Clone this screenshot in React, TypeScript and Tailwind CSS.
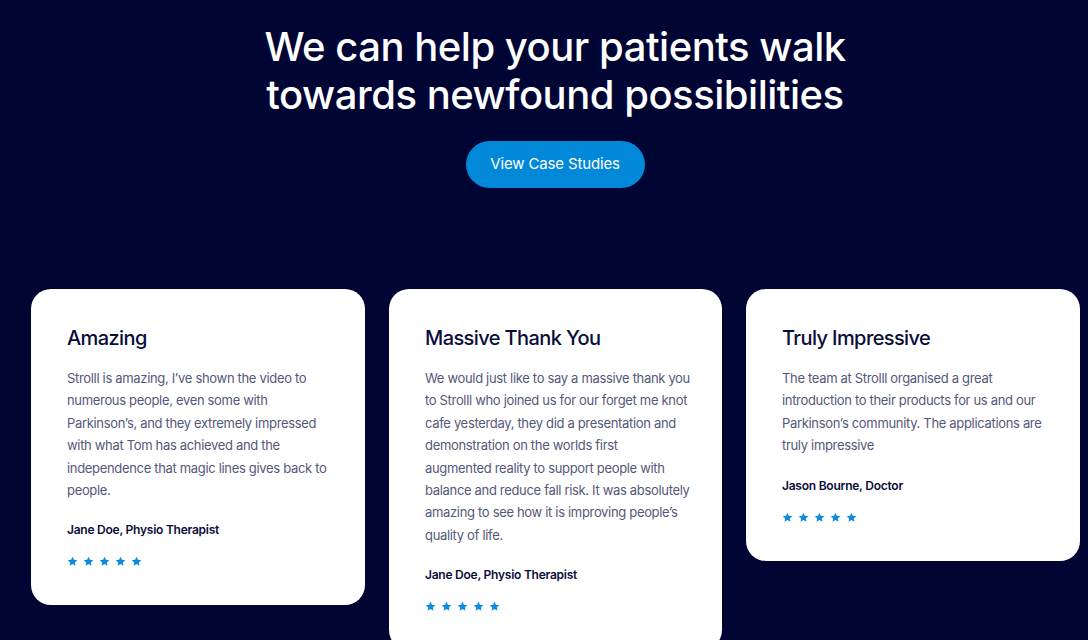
const testimonials = [
  {
    title: 'Amazing',
    lines: [
      'Strolll is amazing, I\u2019ve shown the video to',
      'numerous people, even some with',
      'Parkinson\u2019s, and they extremely impressed',
      'with what Tom has achieved and the',
      'independence that magic lines gives back to',
      'people.',
    ],
    author: 'Jane Doe, Physio Therapist',
    width: 'w-[334px]',
  },
  {
    title: 'Massive Thank You',
    lines: [
      'We would just like to say a massive thank you',
      'to Strolll who joined us for our forget me knot',
      'cafe yesterday, they did a presentation and',
      'demonstration on the worlds first',
      'augmented reality to support people with',
      'balance and reduce fall risk. It was absolutely',
      'amazing to see how it is improving people\u2019s',
      'quality of life.',
    ],
    author: 'Jane Doe, Physio Therapist',
    width: 'w-[333px]',
  },
  {
    title: 'Truly Impressive',
    lines: [
      'The team at Strolll organised a great',
      'introduction to their products for us and our',
      'Parkinson\u2019s community. The applications are',
      'truly impressive',
    ],
    author: 'Jason Bourne, Doctor',
    width: 'w-[334px]',
  },
]

function Star() {
  return (
    <svg viewBox="0 0 24 24" className="w-[11px] h-[11px] fill-[#0a8bdb]">
      <path d="M12 1.5l3.1 6.9 7.4.7-5.6 5 1.7 7.4L12 17.6l-6.6 3.9 1.7-7.4-5.6-5 7.4-.7z" />
    </svg>
  )
}

export default function App() {
  return (
    <div className="w-[1088px] h-[640px] overflow-hidden bg-[#000533] font-['Inter',sans-serif]">
      {/* Hero */}
      <div className="flex flex-col items-center pt-[23px] pl-[22px]">
        <h1 className="text-center text-white text-[40px] leading-[48px] font-medium tracking-[-0.012em]">
          We can help your patients walk
          <br />
          towards newfound possibilities
        </h1>
        <button className="mt-[22px] w-[179px] h-[47px] rounded-full bg-[#0288d9] text-white text-[15px] tracking-[-0.01em]">
          View Case Studies
        </button>
      </div>

      {/* Testimonials */}
      <div className="flex items-start gap-[24px] pl-[31px] mt-[101px]">
        {testimonials.map((t) => (
          <div
            key={t.title}
            className={`${t.width} shrink-0 bg-white rounded-[20px] pt-[35px] pb-[38px] px-[36px]`}
          >
            <h3 className="text-[20px] leading-[28px] font-medium text-[#0a0d3a] tracking-[-0.03em]">
              {t.title}
            </h3>
            <p className="mt-[15px] text-[13px] leading-[22.4px] text-[#54587a] tracking-[-0.025em]">
              {t.lines.map((l, i) => (
                <span key={i} className="block whitespace-nowrap">
                  {l}
                </span>
              ))}
            </p>
            <p className="mt-[19px] text-[12px] leading-[20px] font-semibold text-[#0a0d3a] tracking-[-0.02em]">
              {t.author}
            </p>
            <div className="flex gap-[5px] mt-[16px]">
              <Star />
              <Star />
              <Star />
              <Star />
              <Star />
            </div>
          </div>
        ))}
      </div>
    </div>
  )
}
